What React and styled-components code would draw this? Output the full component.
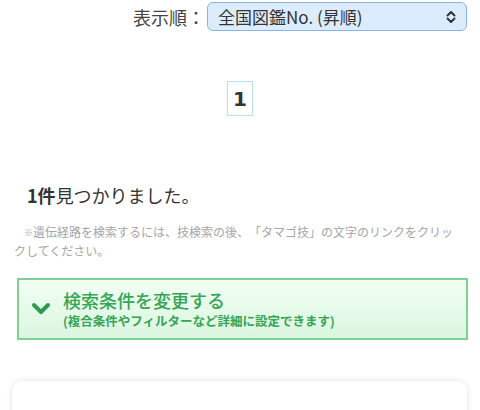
import styled, { createGlobalStyle } from 'styled-components'

const GlobalStyle = createGlobalStyle`
  body {
    margin: 0;
    background: #fff;
    font-family: 'Noto Sans CJK JP', 'Noto Sans', sans-serif;
    color: #333;
    text-spacing-trim: space-all;
  }
`

const Page = styled.div`
  display: flex;
  flex-direction: column;
  width: 480px;
`

const SortBar = styled.div`
  align-items: center;
  display: flex;
  gap: 2px;
  justify-content: flex-end;
  padding: 2px 13px 0 0;
`

const SortLabel = styled.span`
  color: #444;
  font-size: 18px;
  line-height: 28px;
`

const Select = styled.div`
  align-items: center;
  background: #dcecfd;
  border: 1px solid #86b5e2;
  border-radius: 6px;
  box-sizing: border-box;
  color: #333;
  display: flex;
  font-size: 17px;
  height: 29px;
  justify-content: space-between;
  padding: 0 9px 0 10px;
  width: 260px;
`

const Pager = styled.div`
  display: flex;
  justify-content: center;
  padding-top: 50px;
`

const PageNumber = styled.span`
  align-items: center;
  border: 1px solid #bcdcf2;
  box-sizing: border-box;
  color: #333;
  display: flex;
  font-family: 'DejaVu Sans', sans-serif;
  font-size: 20px;
  font-weight: bold;
  height: 35px;
  justify-content: center;
  width: 26px;
`

const ResultCount = styled.p`
  color: #333;
  font-size: 18px;
  margin: 66px 0 0 27px;
  line-height: 26px;

  b {
    font-weight: bold;
  }
`

const Note = styled.p`
  color: #a6a6a6;
  font-size: 12px;
  line-height: 18px;
  margin: 15px 20px 0 14px;
  text-indent: 10px;
`

const NoteMark = styled.span`
  font-size: 9px;
  vertical-align: 1px;
`

const SearchToggle = styled.div`
  align-items: center;
  background: linear-gradient(to bottom, #f2fff4, #daf6df);
  border: 2px solid #7fd193;
  box-sizing: border-box;
  display: flex;
  gap: 12px;
  height: 62px;
  margin: 18px 12px 0 17px;
  padding: 0 0 0 12px;
`

const ToggleText = styled.div`
  color: #35a556;
  display: flex;
  flex-direction: column;
  gap: 3px;
`

const ToggleTitle = styled.span`
  font-size: 18px;
  font-weight: 500;
  line-height: 20px;
`

const ToggleSub = styled.span`
  font-size: 12.5px;
  font-weight: bold;
  line-height: 16px;
`

const Card = styled.div`
  background: #fff;
  border-radius: 10px;
  box-shadow: 0 0 6px rgba(0, 0, 0, 0.12);
  height: 120px;
  margin: 41px 13px 0 12px;
  padding: 24px 0 0 88px;
`

const CardTitle = styled.span`
  color: #444;
  font-size: 17px;
`

const Chevrons = () => (
  <svg width="12" height="14" viewBox="0 0 12 14" fill="none" stroke="#333" strokeWidth="2" strokeLinecap="round" strokeLinejoin="round">
    <path d="M2.5 5.5 6 2l3.5 3.5" />
    <path d="M2.5 8.5 6 12l3.5-3.5" />
  </svg>
)

const Check = () => (
  <svg width="20" height="16" viewBox="0 0 20 16" fill="none" stroke="#2e9a50" strokeWidth="4" strokeLinecap="round" strokeLinejoin="round">
    <path d="M3 4l7 7 7-7" />
  </svg>
)

export default function App() {
  return (
    <Page>
      <GlobalStyle />
      <SortBar>
        <SortLabel>表示順：</SortLabel>
        <Select>
          <span>全国図鑑No. (昇順)</span>
          <Chevrons />
        </Select>
      </SortBar>

      <Pager>
        <PageNumber>1</PageNumber>
      </Pager>

      <ResultCount>
        <b>1件</b>見つかりました。
      </ResultCount>

      <Note>
        <NoteMark>※</NoteMark>遺伝経路を検索するには、技検索の後、「タマゴ技」の文字のリンクをクリックしてください。
      </Note>

      <SearchToggle>
        <Check />
        <ToggleText>
          <ToggleTitle>検索条件を変更する</ToggleTitle>
          <ToggleSub>(複合条件やフィルターなど詳細に設定できます)</ToggleSub>
        </ToggleText>
      </SearchToggle>

      <Card>
        <CardTitle>フシギダネ</CardTitle>
      </Card>
    </Page>
  )
}
